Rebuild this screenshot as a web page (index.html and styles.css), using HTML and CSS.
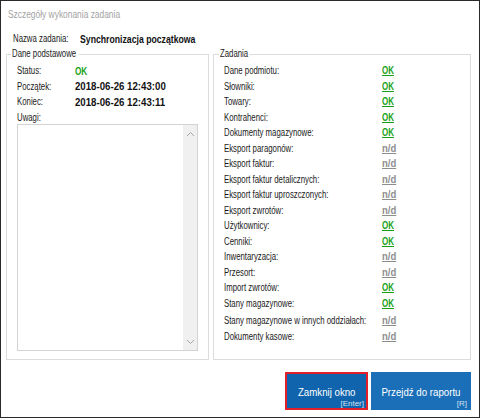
FILE: index.html
```html
<!DOCTYPE html>
<html lang="pl">
<head>
<meta charset="utf-8">
<title>Szczegóły wykonania zadania</title>
<link rel="stylesheet" href="styles.css">
</head>
<body>
<div class="window">
  <div class="title"><span class="t">Szczegóły wykonania zadania</span></div>
  <div class="task">
    <span class="t task-label">Nazwa zadania:</span>
    <span class="t task-name">Synchronizacja początkowa</span>
  </div>
  <div class="groups">
    <fieldset class="group group-basic">
      <legend><span class="t">Dane podstawowe</span></legend>
      <div class="info">
        <span class="t">Status:</span><span class="t ok-plain">OK</span>
        <span class="t">Początek:</span><span class="t date">2018-06-26 12:43:00</span>
        <span class="t">Koniec:</span><span class="t date">2018-06-26 12:43:11</span>
      </div>
      <div class="notes-label"><span class="t">Uwagi:</span></div>
      <div class="notes">
        <div class="notes-text"></div>
        <div class="vscroll">
          <svg width="9" height="6" viewBox="0 0 9 6"><path d="M1 5 L4.5 1.5 L8 5" fill="none" stroke="#a6a6a6" stroke-width="1"/></svg>
          <svg width="9" height="6" viewBox="0 0 9 6"><path d="M1 1 L4.5 4.5 L8 1" fill="none" stroke="#a6a6a6" stroke-width="1"/></svg>
        </div>
      </div>
    </fieldset>
    <fieldset class="group group-tasks">
      <legend><span class="t">Zadania</span></legend>
      <div class="tasks">
        <span class="t">Dane podmiotu:</span><a class="t ok">OK</a>
        <span class="t">Słowniki:</span><a class="t ok">OK</a>
        <span class="t">Towary:</span><a class="t ok">OK</a>
        <span class="t">Kontrahenci:</span><a class="t ok">OK</a>
        <span class="t">Dokumenty magazynowe:</span><a class="t ok">OK</a>
        <span class="t">Eksport paragonów:</span><a class="t nd">n/d</a>
        <span class="t">Eksport faktur:</span><a class="t nd">n/d</a>
        <span class="t">Eksport faktur detalicznych:</span><a class="t nd">n/d</a>
        <span class="t">Eksport faktur uproszczonych:</span><a class="t nd">n/d</a>
        <span class="t">Eksport zwrotów:</span><a class="t nd">n/d</a>
        <span class="t">Użytkownicy:</span><a class="t ok">OK</a>
        <span class="t">Cenniki:</span><a class="t ok">OK</a>
        <span class="t">Inwentaryzacja:</span><a class="t nd">n/d</a>
        <span class="t">Przesort:</span><a class="t nd">n/d</a>
        <span class="t">Import zwrotów:</span><a class="t ok">OK</a>
        <span class="t">Stany magazynowe:</span><a class="t ok">OK</a>
        <span class="t gap1">Stany magazynowe w innych oddziałach:</span><a class="t nd gap1">n/d</a>
        <span class="t gap2">Dokumenty kasowe:</span><a class="t nd gap2">n/d</a>
      </div>
    </fieldset>
  </div>
  <div class="buttons">
    <button class="btn btn-default"><span class="t lbl">Zamknij okno</span><span class="hint">[Enter]</span></button>
    <button class="btn btn-report"><span class="t lbl">Przejdź do raportu</span><span class="hint">[R]</span></button>
  </div>
</div>
</body>
</html>
```
FILE: styles.css
```css
* { box-sizing: border-box; }
html, body { margin: 0; padding: 0; background: #ffffff; }
body {
  font-family: "Liberation Sans", Arial, sans-serif;
  font-size: 10px;
  color: #1a1a1a;
}
.t {
  display: inline-block;
  white-space: nowrap;
  transform: scaleX(0.78);
  transform-origin: 0 50%;
}
.window {
  width: 480px;
  height: 418px;
  border: 1px solid #2a2a2a;
  background: #ffffff;
}
.title {
  margin-top: 1px;
  height: 24px;
  line-height: 24px;
  padding-left: 7px;
  color: #a3a3a3;
  font-size: 10.5px;
}
.title .t { transform: scaleX(0.8); }
.task {
  margin-top: 6px;
  height: 14px;
  line-height: 14px;
  padding-left: 12px;
  display: grid;
  grid-template-columns: 67px auto;
  align-items: center;
}
.task-name { font-weight: bold; font-size: 11px; color: #111; }
.task .task-name { transform: scaleX(0.79); }
.groups {
  margin-top: 2px;
  padding-left: 5px;
  display: flex;
  gap: 4px;
}
.group {
  margin: 0;
  border: 1px solid #dcdcdc;
  height: 312px;
  padding: 3px 10px 0 10px;
  min-width: 0;
}
.group legend {
  padding: 0 1px;
  line-height: 12px;
  color: #1a1a1a;
  white-space: nowrap;
}
.group-basic { width: 203px; }
.group-basic legend { margin-left: -6px; width: 68px; }
.group-tasks { width: 258px; }
.group-tasks legend { margin-left: -5px; width: 30px; }
.info {
  display: grid;
  grid-template-columns: 58px auto;
  grid-auto-rows: 15.5px;
  align-items: center;
  justify-items: start;
}
.ok-plain { color: #16a116; font-weight: bold; font-size: 10.5px; }
.date { font-weight: bold; font-size: 10.5px; color: #111; }
.info .date { transform: scaleX(0.92); }
.notes-label { line-height: 11px; margin-top: 2px; }
.notes {
  margin-top: 1px;
  width: 181px;
  height: 227px;
  border: 1px solid #d3d3d3;
  display: flex;
}
.notes-text { flex: 1; }
.vscroll {
  width: 14px;
  background: #f0f0f0;
  display: flex;
  flex-direction: column;
  justify-content: space-between;
  align-items: center;
  padding: 6px 0 5px;
}
.tasks {
  display: grid;
  grid-template-columns: 158px auto;
  grid-auto-rows: 15.5px;
  align-items: center;
  justify-items: start;
}
.tasks .gap1 { margin-top: 3px; }
.tasks .gap2 { margin-top: 4px; }
.ok, .nd { font-weight: bold; text-decoration: underline; font-size: 10px; }
.ok { color: #17a117; transform: scaleX(0.8); }
.nd { color: #8e8e8e; transform: scaleX(0.95); }
.buttons {
  margin-top: 12px;
  padding-right: 8px;
  display: flex;
  justify-content: flex-end;
  gap: 3px;
}
.btn {
  height: 38px;
  border: 2px solid #1b6fb8;
  background: #1b6fb8;
  color: #ffffff;
  font-family: inherit;
  display: flex;
  flex-direction: column;
  align-items: center;
  padding: 0;
}
.btn-default {
  width: 83px;
  border-color: #e2202c;
  background: #0f64ad;
}
.btn-report { width: 100px; }
.btn .lbl {
  margin-top: 11px;
  line-height: 14px;
  font-size: 11px;
  transform: scaleX(0.88);
  transform-origin: 50% 50%;
}
.btn .hint {
  margin-top: auto;
  align-self: flex-end;
  line-height: 9px;
  font-size: 8px;
  padding: 0 2px 1px 0;
  color: #d3e2f2;
}
```
